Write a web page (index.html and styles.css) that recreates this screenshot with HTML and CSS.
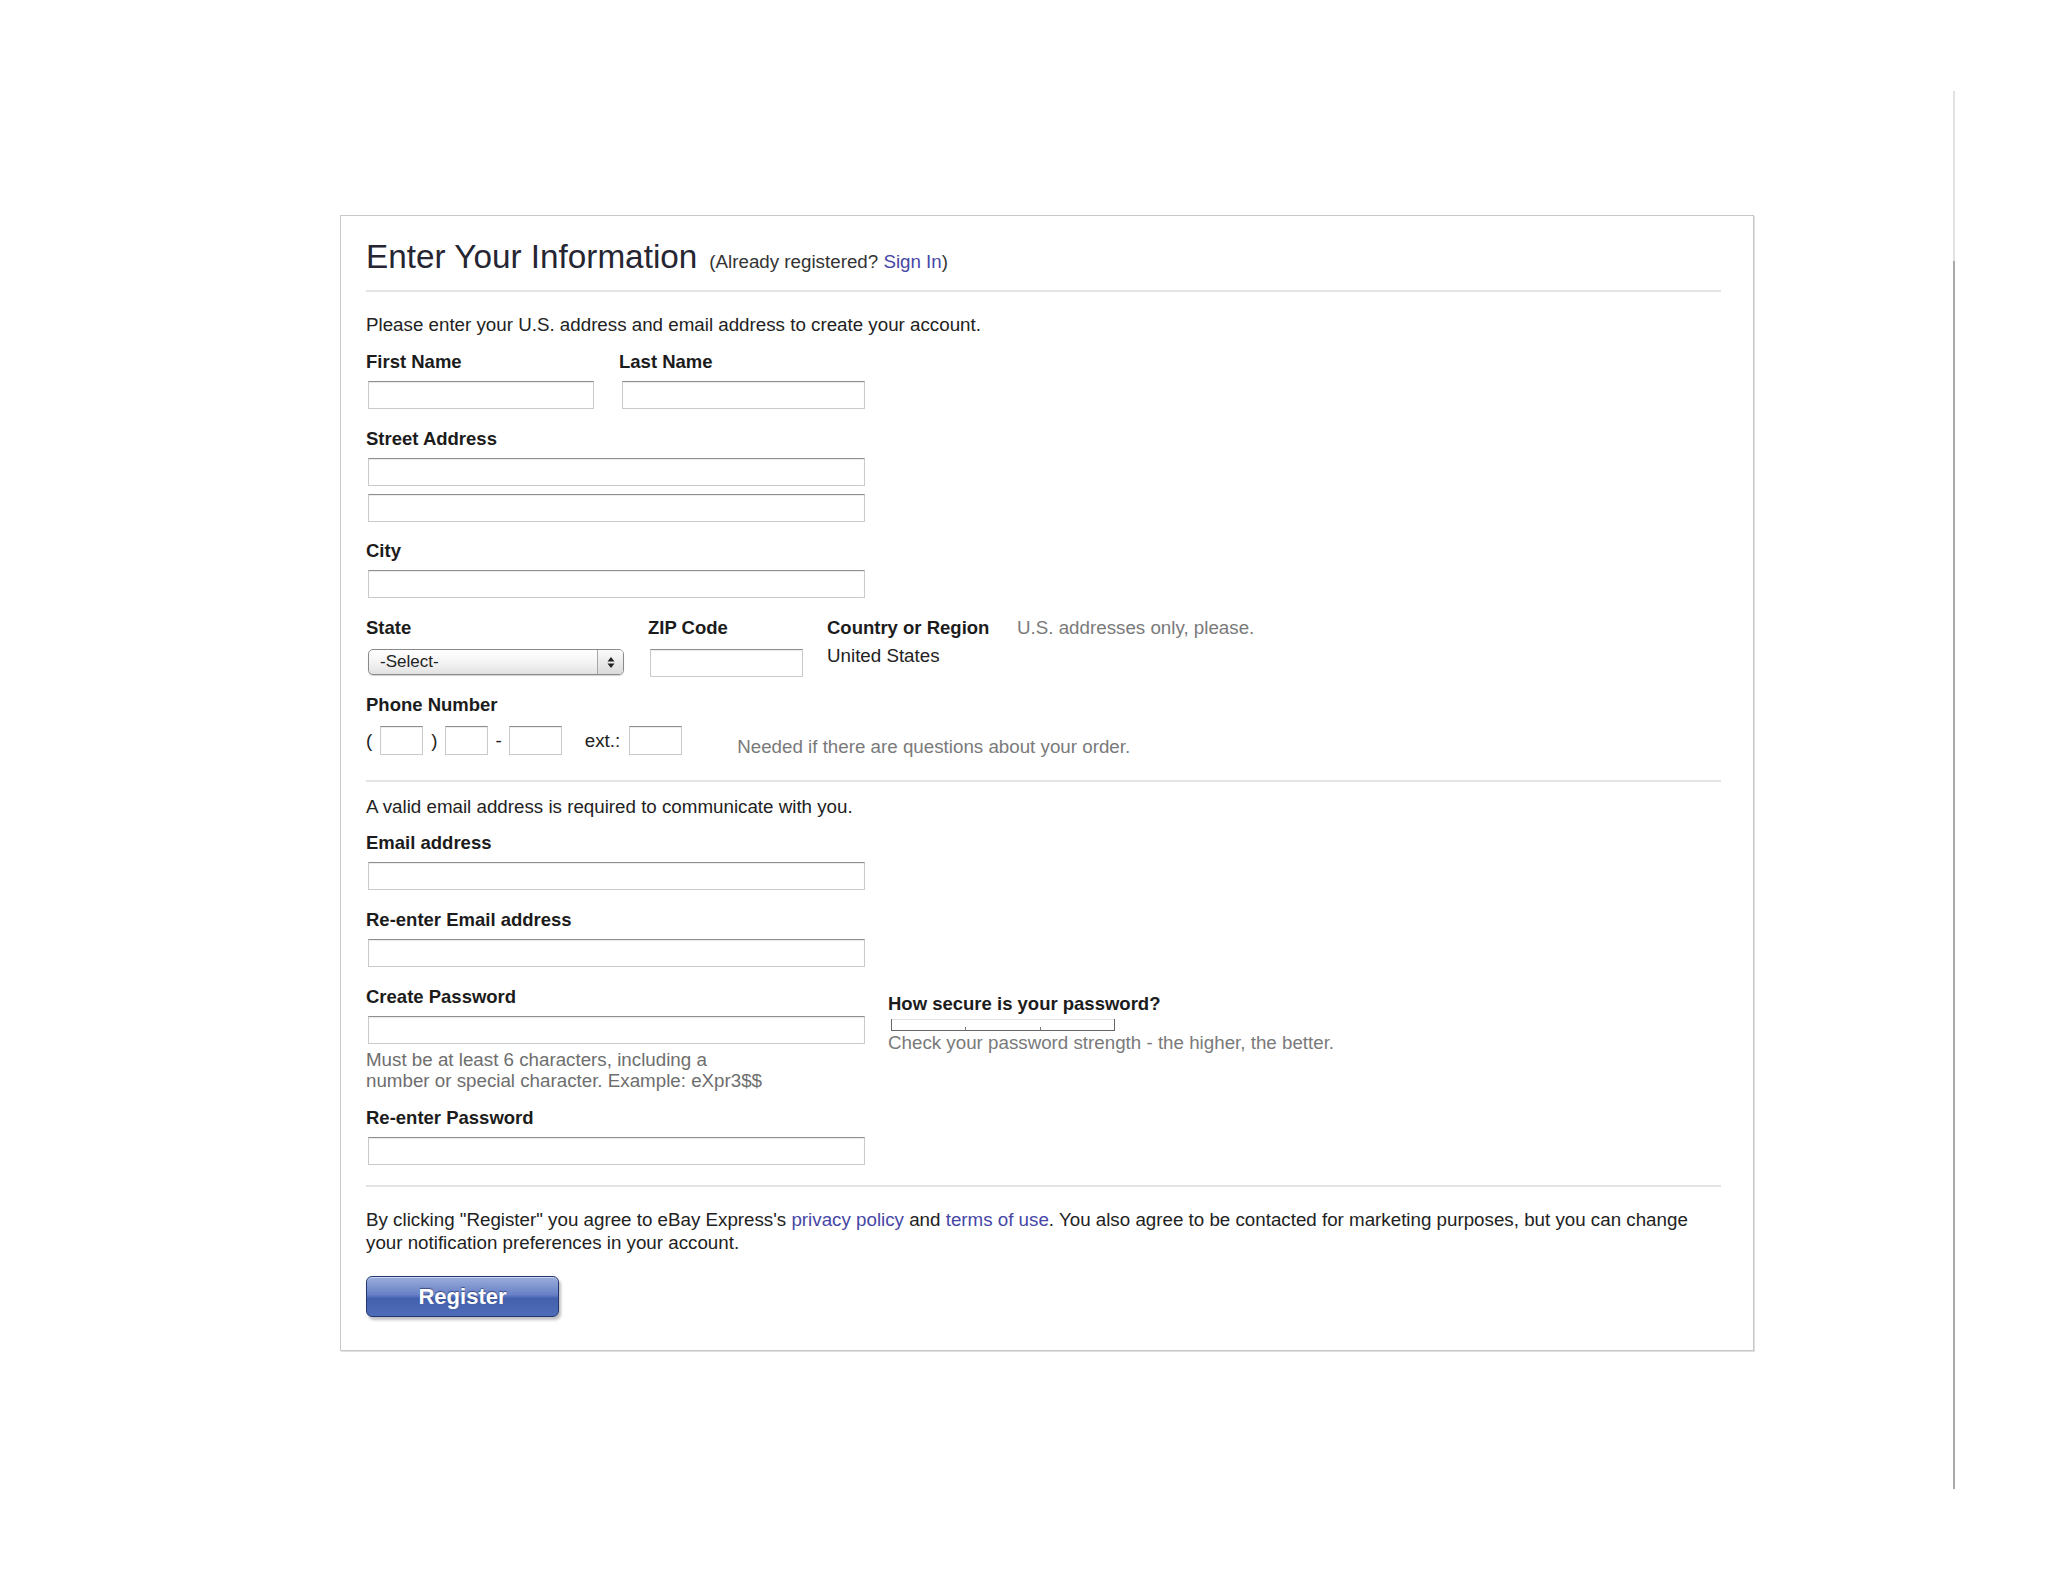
FILE: index.html
```html
<!DOCTYPE html>
<html lang="en">
<head>
<meta charset="utf-8">
<title>Enter Your Information</title>
<link rel="stylesheet" href="styles.css">
</head>
<body>
<div class="page">
  <div class="card">
    <div class="head">
      <h1>Enter Your Information</h1>
      <span class="already">(Already registered? <a href="#">Sign In</a>)</span>
    </div>

    <p class="intro">Please enter your U.S. address and email address to create your account.</p>

    <div class="row names">
      <div class="col-first">
        <label>First Name</label>
        <input class="txt w-first" type="text">
      </div>
      <div>
        <label>Last Name</label>
        <input class="txt w-last" type="text">
      </div>
    </div>

    <div class="group g-street">
      <label>Street Address</label>
      <input class="txt w-full" type="text">
      <input class="txt w-full" type="text">
    </div>

    <div class="group g-city">
      <label>City</label>
      <input class="txt w-full" type="text">
    </div>

    <div class="row g-state">
      <div class="col-state">
        <label>State</label>
        <div class="select">
          <span class="sel-text">-Select-</span>
          <span class="sel-arrows">
            <svg width="8" height="13" viewBox="0 0 8 13"><path d="M4 1 L7.5 5.5 H0.5 Z M0.5 7.5 H7.5 L4 12 Z" fill="#222"/></svg>
          </span>
        </div>
      </div>
      <div class="col-zip">
        <label>ZIP Code</label>
        <input class="txt w-zip zip" type="text">
      </div>
      <div class="col-country">
        <label>Country or Region</label>
        <p class="country">United States</p>
      </div>
      <p class="note">U.S. addresses only, please.</p>
    </div>

    <div class="group g-phone">
      <label>Phone Number</label>
      <div class="phone">
        <span class="sym paren-l">(</span>
        <input class="ph w43" type="text">
        <span class="sym paren-r">)</span>
        <input class="ph w43" type="text">
        <span class="sym dash">-</span>
        <input class="ph w53" type="text">
        <span class="sym ext">ext.:</span>
        <input class="ph w53" type="text">
        <span class="note phone-note">Needed if there are questions about your order.</span>
      </div>
    </div>

    <div class="divider d-1"></div>

    <p class="valid">A valid email address is required to communicate with you.</p>

    <div class="group g-email">
      <label>Email address</label>
      <input class="txt w-full" type="text">
    </div>

    <div class="group g-next">
      <label>Re-enter Email address</label>
      <input class="txt w-full" type="text">
    </div>

    <div class="row g-next">
      <div class="col-pw">
        <label>Create Password</label>
        <input class="txt w-full" type="password">
        <p class="hint">Must be at least 6 characters, including a<br>number or special character. Example: eXpr3$$</p>
      </div>
      <div class="col-strength">
        <label>How secure is your password?</label>
        <svg class="meter" width="224" height="13" viewBox="0 0 224 13">
          <line x1="1" y1="1.5" x2="223" y2="1.5" stroke="#e2e2e2" stroke-width="1"/>
          <line x1="0.5" y1="1" x2="0.5" y2="13" stroke="#666" stroke-width="1"/>
          <line x1="223.5" y1="1" x2="223.5" y2="13" stroke="#666" stroke-width="1"/>
          <line x1="0" y1="12.5" x2="224" y2="12.5" stroke="#666" stroke-width="1"/>
          <line x1="74.5" y1="9" x2="74.5" y2="13" stroke="#777" stroke-width="1"/>
          <line x1="149.5" y1="9" x2="149.5" y2="13" stroke="#777" stroke-width="1"/>
        </svg>
        <p class="note">Check your password strength - the higher, the better.</p>
      </div>
    </div>

    <div class="group g-repw">
      <label>Re-enter Password</label>
      <input class="txt w-full" type="password">
    </div>

    <div class="divider d-2"></div>

    <p class="legal">By clicking "Register" you agree to eBay Express's <a href="#">privacy policy</a> and <a href="#">terms of use</a>. You also agree to be contacted for marketing purposes, but you can change<br>your notification preferences in your account.</p>

    <button class="register" type="button">Register</button>
  </div>
  <div class="vline"></div>
</div>
</body>
</html>
```

FILE: styles.css
```css
html, body {
  margin: 0;
  padding: 0;
  background: #ffffff;
}

body {
  font-family: "Liberation Sans", Arial, Helvetica, sans-serif;
  font-size: 18.75px;
  color: #222222;
}

.page {
  display: flex;
  align-items: flex-start;
  min-height: 1582px;
}

.card {
  box-sizing: border-box;
  width: 1414px;
  margin: 215px 0 0 340px;
  padding: 21px 32px 33px 25px;
  border: 1px solid #c8c8c8;
  box-shadow: 1px 1px 0 #e0e0e0;
  background: #ffffff;
}

.head {
  display: flex;
  align-items: baseline;
  padding-bottom: 13px;
  border-bottom: 2px solid #e4e4e4;
}

h1 {
  margin: 0;
  font-size: 33.3px;
  font-weight: normal;
  line-height: 40px;
  color: #262633;
}

.already {
  margin-left: 12px;
  color: #333333;
}

a {
  color: #4646a6;
  text-decoration: none;
}

p {
  margin: 0;
  line-height: 22px;
}

label {
  display: block;
  font-size: 18.5px;
  font-weight: bold;
  line-height: 22px;
  color: #1c1c1c;
}

.intro {
  margin-top: 22px;
}

.row {
  display: flex;
}

.names {
  margin-top: 15px;
}

.col-first {
  width: 253px;
}

.txt {
  display: block;
  box-sizing: border-box;
  height: 28px;
  margin: 8px 0 0 2px;
  padding: 0;
  border: 1px solid #cacaca;
  border-top-color: #8e8e8e;
  box-shadow: inset 0 1px 1px rgba(0, 0, 0, 0.08);
  background: #ffffff;
  font: inherit;
}

.w-first { width: 226px; }
.w-last { width: 243px; margin-left: 3px; }
.w-full { width: 497px; }
.w-zip { width: 153px; }

.g-street { margin-top: 19px; }
.g-city { margin-top: 18px; }
.g-state { margin-top: 19px; }
.g-phone { margin-top: 17px; }
.g-email { margin-top: 14px; }
.g-next { margin-top: 19px; }
.g-repw { margin-top: 16px; }

.col-state { width: 282px; }
.col-zip { width: 179px; }
.col-country { width: 190px; }

.zip {
  margin-top: 10px;
}

.select {
  display: flex;
  box-sizing: border-box;
  width: 256px;
  height: 26px;
  margin: 10px 0 0 2px;
  border: 1px solid #8a8a8a;
  border-radius: 5px;
  background: linear-gradient(#ffffff, #f4f4f4 50%, #e2e2e2);
  box-shadow: 0 1px 1px rgba(0, 0, 0, 0.18);
  overflow: hidden;
}

.sel-text {
  flex: 1;
  padding-left: 11px;
  font-size: 17px;
  line-height: 24px;
  color: #222222;
}

.sel-arrows {
  display: flex;
  align-items: center;
  justify-content: center;
  width: 25px;
  border-left: 1px solid #a8a8a8;
  background: linear-gradient(#fbfbfb, #dadada);
}

.country {
  margin-top: 6px;
}

.note {
  color: #7a7a7a;
}

.phone {
  display: flex;
  align-items: flex-start;
  margin-top: 10px;
}

.sym {
  line-height: 29px;
}

.ph {
  display: block;
  box-sizing: border-box;
  height: 29px;
  margin: 0;
  padding: 0;
  border: 1px solid #cacaca;
  border-top-color: #8e8e8e;
  box-shadow: inset 0 1px 1px rgba(0, 0, 0, 0.08);
  background: #ffffff;
  font: inherit;
}

.w43 { width: 43px; }
.w53 { width: 53px; }

.paren-l { margin-right: 8px; }
.paren-r { margin: 0 7px 0 8px; }
.dash { margin: 0 7px 0 8px; }
.ext { margin: 0 9px 0 23px; }

.phone-note {
  margin: 10px 0 0 55px;
  line-height: 22px;
}

.divider {
  border-top: 2px solid #e4e4e4;
}

.d-1 { margin-top: 22px; }
.d-2 { margin-top: 20px; }

.valid {
  margin-top: 14px;
}

.col-pw {
  width: 522px;
}

.hint {
  margin-top: 5px;
  line-height: 21px;
  color: #6e6e6e;
}

.col-strength {
  padding-top: 7px;
}

.meter {
  display: block;
  margin: 3px 0 1px 3px;
}

.legal {
  margin-top: 21px;
  line-height: 23px;
  white-space: nowrap;
}

.register {
  display: block;
  box-sizing: border-box;
  width: 193px;
  height: 41px;
  margin-top: 22px;
  padding: 0;
  border: 1px solid #223670;
  border-radius: 6px;
  background: linear-gradient(#9aaddc, #6981c6 45%, #4461ae 55%, #4f6cb8);
  box-shadow: 2px 3px 3px rgba(0, 0, 0, 0.25), inset 0 1px 0 rgba(255, 255, 255, 0.5);
  color: #ffffff;
  font-family: "Liberation Sans", Arial, Helvetica, sans-serif;
  font-size: 22px;
  font-weight: bold;
  text-shadow: 0 -1px 1px rgba(20, 30, 80, 0.6);
}

.vline {
  flex: none;
  width: 2px;
  height: 1398px;
  margin: 91px 0 0 199px;
  background: linear-gradient(to bottom, #e2e2e2 0, #e2e2e2 170px, #a9a9a9 170px, #a9a9a9 100%);
}
```
